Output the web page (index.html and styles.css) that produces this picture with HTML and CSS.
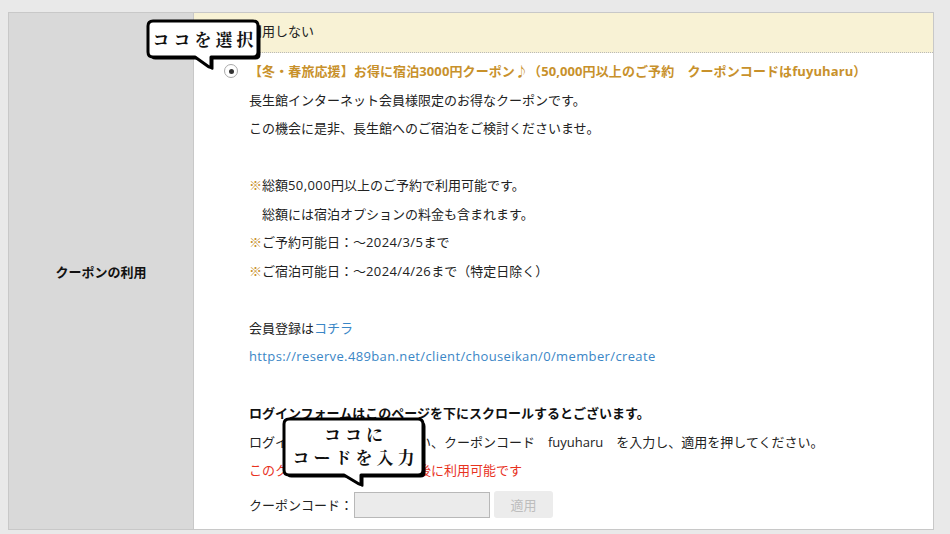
FILE: index.html
```html
<!DOCTYPE html>
<html lang="ja">
<head>
<meta charset="utf-8">
<link rel="stylesheet" href="styles.css">
</head>
<body>
<div class="table">
  <div class="label-cell">クーポンの利用</div>
  <div class="value-cell">
    <div class="none-row">
      <span class="radio"></span>
      <span>利用しない</span>
    </div>
    <div class="coupon">
      <div class="line title-line"><span class="radio checked"></span><span class="title">【冬・春旅応援】お得に宿泊3000円クーポン♪（50,000円以上のご予約　クーポンコードはfuyuharu）</span></div>
      <div class="body">
        <div class="line">長生館インターネット会員様限定のお得なクーポンです。</div>
        <div class="line">この機会に是非、長生館へのご宿泊をご検討くださいませ。</div>
        <div class="line"></div>
        <div class="line"><span class="mark">※</span>総額<span class="num">50,000</span>円以上のご予約で利用可能です。</div>
        <div class="line">　総額には宿泊オプションの料金も含まれます。</div>
        <div class="line"><span class="mark">※</span>ご予約可能日：～<span class="num">2024/3/5</span>まで</div>
        <div class="line"><span class="mark">※</span>ご宿泊可能日：～<span class="num">2024/4/26</span>まで（特定日除く）</div>
        <div class="line"></div>
        <div class="line">会員登録は<a class="link" href="#">コチラ</a></div>
        <div class="line"><a class="link url" href="#">https://reserve.489ban.net/client/chouseikan/0/member/create</a></div>
        <div class="line"></div>
        <div class="line strong">ログインフォームはこのページを下にスクロールするとございます。</div>
        <div class="line">ログイン後予約へお進み下さい、クーポンコード　fuyuharu　を入力し、適用を押してください。</div>
        <div class="line red">このクーポンは会員ログイン後に利用可能です</div>
        <div class="code-row">
          <span>クーポンコード：</span>
          <input class="code-input" type="text">
          <button class="apply" type="button">適用</button>
        </div>
      </div>
    </div>
  </div>

  <div class="bubble bubble-select">
    <svg class="bubble-bg" width="118" height="53" viewBox="0 0 118 53">
      <path transform="translate(2.5,2.5)" fill="#000" d="M7,2 H107 Q112,2 112,7 V33 Q112,38 107,38 H65 V47 Q65,49 63,48 L49,38 H7 Q2,38 2,33 V7 Q2,2 7,2 Z"/>
      <path fill="#fff" stroke="#000" stroke-width="3" stroke-linejoin="round" d="M7,2 H107 Q112,2 112,7 V33 Q112,38 107,38 H65 V47 Q65,49 63,48 L49,38 H7 Q2,38 2,33 V7 Q2,2 7,2 Z"/>
    </svg>
    <div class="bubble-text">ココを選択</div>
  </div>

  <div class="bubble bubble-code">
    <svg class="bubble-bg" width="148" height="74" viewBox="0 0 148 74">
      <path transform="translate(2.5,2.5)" fill="#000" d="M7,2 H136 Q141,2 141,7 V53 Q141,58 136,58 H79 V66 Q79,68 77,67 L62,58 H7 Q2,58 2,53 V7 Q2,2 7,2 Z"/>
      <path fill="#fff" stroke="#000" stroke-width="3" stroke-linejoin="round" d="M7,2 H136 Q141,2 141,7 V53 Q141,58 136,58 H79 V66 Q79,68 77,67 L62,58 H7 Q2,58 2,53 V7 Q2,2 7,2 Z"/>
    </svg>
    <div class="bubble-text two">ココに<br>コードを入力</div>
  </div>
</div>
</body>
</html>
```

FILE: styles.css
```css
* { box-sizing: border-box; }
html, body { margin: 0; padding: 0; }
body {
  background: #e9e9e9;
  font-family: "Open Sans", "Noto Sans CJK JP", sans-serif;
  font-size: 13px;
  color: #222;
  width: 950px;
  height: 534px;
  overflow: hidden;
}
.table {
  position: relative;
  margin: 12px 0 0 8px;
  width: 926px;
  display: grid;
  grid-template-columns: 185px 1fr;
  border: 1px solid #c8c8c8;
  background: #fff;
}
.label-cell {
  background: #d9d9d9;
  border-right: 1px solid #c8c8c8;
  display: flex;
  align-items: center;
  justify-content: center;
  font-weight: bold;
  color: #111;
  font-size: 13px;
}
.value-cell { background: #fff; }
.none-row {
  background: #f8f2d5;
  height: 40px;
  border-bottom: 1px dotted #b9b9b9;
  display: flex;
  align-items: center;
  padding: 0 0 4px 30px;
  color: #222;
}
.radio {
  display: inline-flex;
  align-items: center;
  justify-content: center;
  width: 14px;
  height: 14px;
  border-radius: 50%;
  border: 1px solid #a9a9a9;
  background: #fff;
  margin-right: 11px;
  flex: none;
}
.radio.checked::after {
  content: "";
  width: 5px;
  height: 5px;
  border-radius: 50%;
  background: #333;
}
.coupon { padding: 4px 0 11px 0; }
.line {
  line-height: 28.5px;
  height: 28.5px;
  white-space: nowrap;
}
.title-line {
  display: flex;
  align-items: center;
  padding-left: 30px;
}
.title {
  color: #c8912b;
  font-weight: bold;
  letter-spacing: 0.1px;
}
.body { padding-left: 55px; }
.mark { color: #c8912b; }
.num { letter-spacing: 0.4px; }
.link { color: #3a86c6; text-decoration: none; }
.url { letter-spacing: 0.37px; }
.strong { font-weight: bold; color: #111; }
.red { color: #e8321e; }
.code-row {
  display: flex;
  align-items: center;
  margin-top: 6.5px;
  height: 27px;
}
.code-input {
  width: 136px;
  height: 26px;
  margin: 0 4px 0 1px;
  background: #ebebeb;
  border: 1px solid #b8b8b8;
  padding: 0;
}
.apply {
  width: 59px;
  height: 27px;
  border: none;
  border-radius: 3px;
  background: #ececec;
  color: #bdbdbd;
  font-family: "Open Sans", "Noto Sans CJK JP", sans-serif;
  font-size: 13px;
  padding: 0;
}
.bubble { position: absolute; }
.bubble-bg { position: absolute; left: 0; top: 0; display: block; }
.bubble-text {
  position: relative;
  font-family: "Noto Serif CJK JP", "Noto Sans CJK JP", serif;
  font-weight: bold;
  font-size: 17px;
  letter-spacing: 4px;
  color: #111;
  text-align: center;
  white-space: nowrap;
}
.bubble-select { left: 137px; top: 6px; width: 118px; height: 53px; }
.bubble-select .bubble-text { width: 114px; padding-left: 4px; line-height: 40px; }
.bubble-code { left: 273px; top: 404px; width: 148px; height: 74px; }
.bubble-code .bubble-text { width: 143px; padding: 5px 0 0 4px; line-height: 23px; }
```
